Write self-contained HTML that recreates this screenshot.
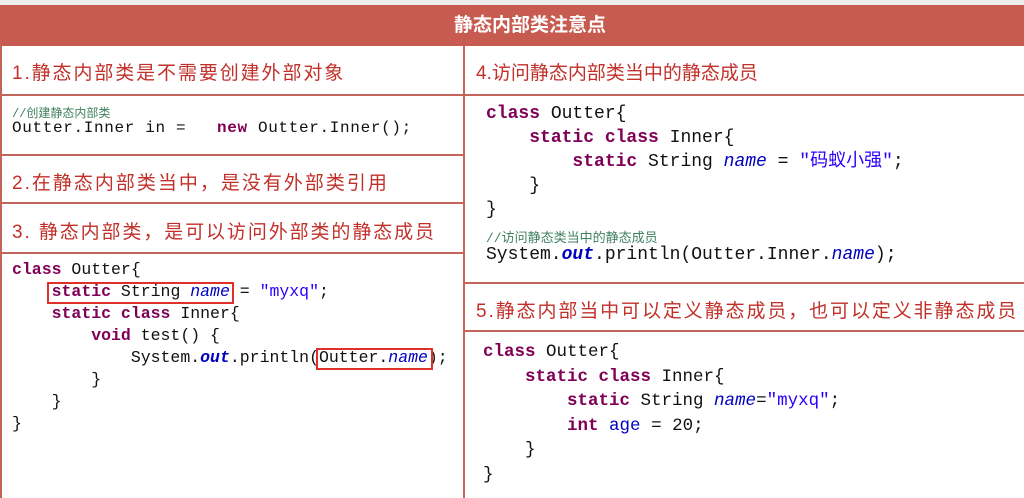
<!DOCTYPE html>
<html><head><meta charset="utf-8"><style>
*{margin:0;padding:0;box-sizing:border-box}
body{width:1024px;height:498px;background:#fff;position:relative;overflow:hidden;font-family:"Liberation Sans","Noto Sans CJK SC",sans-serif}
.a{position:absolute}
.hd{left:0;top:5px;width:1024px;height:41px;background:#c75b50;color:#fff;font-weight:bold;font-size:19px;line-height:41px;text-align:center;padding-left:36px}
.hl{position:absolute;height:2px;background:#c2655b}
.vl{position:absolute;width:2px;background:#c2655b}
.t{position:absolute;color:#c2302a;font-size:19px;white-space:nowrap}
.c{position:absolute;font-family:"Liberation Mono","Noto Sans CJK SC",monospace;white-space:pre;color:#111}
.k{color:#7f0055;font-weight:bold}
.i{color:#0000c0;font-style:italic}
.ib{color:#0000c0;font-style:italic;font-weight:bold}
.s{color:#2a00ff}
.box{position:absolute;border:2px solid #e0302a}
</style></head><body>
<div class="a" style="left:0;top:0;width:1024px;height:5px;background:#eee"></div>
<div class="a hd">静态内部类注意点</div>
<div class="vl" style="left:0;top:46px;height:452px"></div>
<div class="vl" style="left:463px;top:46px;height:452px"></div>
<div class="hl" style="left:0;top:94px;width:1024px"></div>
<div class="hl" style="left:0;top:154px;width:464px"></div>
<div class="hl" style="left:0;top:202px;width:464px"></div>
<div class="hl" style="left:0;top:252px;width:464px"></div>
<div class="hl" style="left:464px;top:282px;width:560px"></div>
<div class="hl" style="left:464px;top:330px;width:560px"></div>

<div class="t" style="left:12px;top:58px;letter-spacing:1.9px">1.静态内部类是不需要创建外部对象</div>
<div class="t" style="left:12px;top:168px;letter-spacing:2px">2.在静态内部类当中，是没有外部类引用</div>
<div class="t" style="left:12px;top:217px;letter-spacing:1.9px">3. 静态内部类，是可以访问外部类的静态成员</div>
<div class="t" style="left:476px;top:58px">4.访问静态内部类当中的静态成员</div>
<div class="t" style="left:476px;top:296px;letter-spacing:1.9px">5.静态内部当中可以定义静态成员，也可以定义非静态成员</div>

<div class="c" style="left:12px;top:104px;font-size:12px;color:#3f7f5f">//创建静态内部类</div>
<div class="c" style="left:12px;top:119px;font-size:16px;letter-spacing:0.65px">Outter.Inner in =   <span class="k">new</span> Outter.Inner();</div>

<div class="c" style="left:12px;top:259px;font-size:16.5px;line-height:22px"><span class="k">class</span> Outter{
    <span class="k">static</span> String <span class="i">name</span> = <span class="s">"myxq"</span>;
    <span class="k">static class</span> Inner{
        <span class="k">void</span> test() {
            System.<span class="ib">out</span>.println(Outter.<span class="i">name</span>);
        }
    }
}</div>
<div class="box" style="left:47px;top:282px;width:187px;height:22px"></div>
<div class="box" style="left:316px;top:348px;width:117px;height:22px"></div>

<div class="c" style="left:486px;top:102px;font-size:18px;line-height:24px"><span class="k">class</span> Outter{
    <span class="k">static class</span> Inner{
        <span class="k">static</span> String <span class="i">name</span> = <span class="s">"码蚁小强"</span>;
    }
}</div>
<div class="c" style="left:486px;top:227px;font-size:13px;color:#3f7f5f">//访问静态类当中的静态成员</div>
<div class="c" style="left:486px;top:245px;font-size:18px">System.<span class="ib">out</span>.println(Outter.Inner.<span class="i">name</span>);</div>

<div class="c" style="left:483px;top:340px;font-size:17.5px;line-height:24.5px"><span class="k">class</span> Outter{
    <span class="k">static class</span> Inner{
        <span class="k">static</span> String <span class="i">name</span>=<span class="s">"myxq"</span>;
        <span class="k">int</span> <span style="color:#0000c0">age</span> = 20;
    }
}</div>
</body></html>
